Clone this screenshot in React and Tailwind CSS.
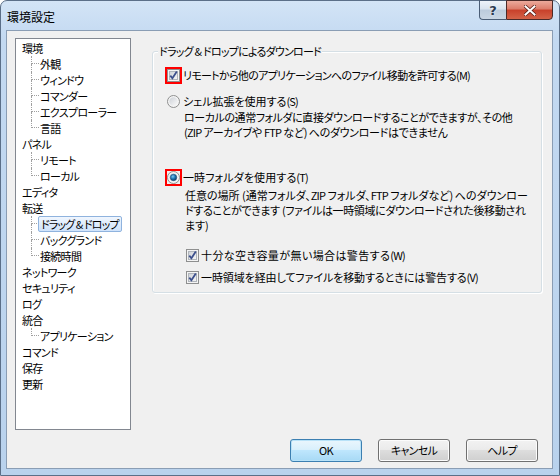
import React from 'react';

const tree = [
  { label: '環境', children: ['外観', 'ウィンドウ', 'コマンダー', 'エクスプローラー', '言語'] },
  { label: 'パネル', children: ['リモート', 'ローカル'] },
  { label: 'エディタ' },
  { label: '転送', children: ['ドラッグ & ドロップ', 'バックグランド', '接続時間'] },
  { label: 'ネットワーク' },
  { label: 'セキュリティ' },
  { label: 'ログ' },
  { label: '統合', children: ['アプリケーション'] },
  { label: 'コマンド' },
  { label: '保存' },
  { label: '更新' },
];

const CheckBox = ({ id }) => (
  <svg width="13" height="13" viewBox="0 0 13 13" className="shrink-0 block">
    <defs>
      <linearGradient id={id} x1="0" y1="0" x2="1" y2="1">
        <stop offset="0" stopColor="#cdd1d7" />
        <stop offset="1" stopColor="#f7f7f7" />
      </linearGradient>
    </defs>
    <rect x="0.5" y="0.5" width="12" height="12" fill="#f4f4f4" stroke="#8e8f8f" />
    <rect x="2.5" y="2.5" width="8" height="8" fill={`url(#${id})`} stroke="#b0b5bc" />
    <path d="M3.3 6.6 L5.4 9.2 L9.8 2.6" fill="none" stroke="#3c4f8c" strokeWidth="1.8" />
  </svg>
);

const Radio = ({ id, checked }) => (
  <svg width="13" height="13" viewBox="0 0 13 13" className="shrink-0 block">
    <defs>
      <linearGradient id={id} x1="0" y1="0" x2="1" y2="1">
        <stop offset="0" stopColor="#cdd1d7" />
        <stop offset="1" stopColor="#fafafa" />
      </linearGradient>
      <radialGradient id={`${id}b`} cx="0.4" cy="0.35" r="0.7">
        <stop offset="0" stopColor="#7cc8f0" />
        <stop offset="0.5" stopColor="#1b76b4" />
        <stop offset="1" stopColor="#0b2f56" />
      </radialGradient>
    </defs>
    <circle cx="6.5" cy="6.5" r="6" fill="#f4f4f4" stroke="#8e8f8f" />
    <circle cx="6.5" cy="6.5" r="4.2" fill={`url(#${id})`} />
    {checked && <circle cx="6.5" cy="6.5" r="3.2" fill={`url(#${id}b)`} stroke="#1b4b78" strokeWidth="0.6" />}
  </svg>
);

const RedMark = ({ children }) => (
  <div className="w-[17px] h-[17px] border-2 border-[#ff0000] shrink-0 flex items-center justify-center">
    {children}
  </div>
);

const Button = ({ children, primary }) => (
  <button
    className={
      'w-[72px] h-[23px] rounded-[3px] border text-[11px] leading-none text-black flex items-center justify-center ' +
      (primary
        ? 'border-[#3c7fb1] bg-[linear-gradient(#eaf6fd_0%,#d9f0fc_45%,#bee6fd_50%,#a7d9f5_100%)] shadow-[inset_0_0_0_1px_#b8e2f8]'
        : 'border-[#707070] bg-[linear-gradient(#f2f2f2_0%,#ebebeb_45%,#dddddd_50%,#cfcfcf_100%)] shadow-[inset_0_0_0_1px_#fcfcfc]')
    }
  >
    {children}
  </button>
);

const TreeChild = ({ label, last, selected }) => (
  <div className="flex h-[16px] items-center whitespace-nowrap">
    <div className="ml-[9px] w-[8px] h-full flex flex-col shrink-0">
      <div className="h-[8px] border-l border-b border-dotted border-[#a0a0a0]" />
      {!last && <div className="h-[8px] border-l border-dotted border-[#a0a0a0]" />}
    </div>
    {selected ? (
      <span className="-ml-[1px] h-[16px] flex items-center px-[2px] border border-[#8fb3de] rounded-[2px] bg-[linear-gradient(#f0f6fe,#cfe3fb)] tracking-[-0.9px]">
        {label}
      </span>
    ) : (
      <span className="ml-[1px]">{label}</span>
    )}
  </div>
);

// lines are set to the widths measured on the original dialog
const Line = ({ className, children }) => (
  <div className={'shrink-0 tracking-[-0.8px] [text-align-last:justify] text-justify ' + className}>{children}</div>
);

export default function App() {
  return (
    <div className="w-[560px] h-[476px] overflow-hidden font-['Noto_Sans_CJK_JP',sans-serif] [font-feature-settings:'palt'] text-[11px] tracking-[-0.7px] text-black">
      <div className="w-full h-full flex flex-col border border-[#5b6f88] rounded-t-[7px] bg-[linear-gradient(#d3e4f6_0%,#c3d9f1_8%,#b9d2ed_100%)]">
        {/* Title bar */}
        <div className="h-[29px] flex items-start justify-between shrink-0">
          <div className="pl-[6px] pt-[7px] text-[12px] leading-[18px] tracking-normal">環境設定</div>
          <div className="flex mr-[6px] -mt-px">
            <div className="w-[27px] h-[20px] border border-[#4a5d76] border-r-0 rounded-bl-[4px] bg-[linear-gradient(#eef3f9_0%,#d9e3ee_45%,#bccbdc_50%,#c9d6e4_100%)] flex items-center justify-center font-['DejaVu_Sans',sans-serif] text-[13px] font-bold text-[#2b3950] leading-none tracking-normal [text-shadow:0_0_2px_#fff]">
              ?
            </div>
            <div className="w-[47px] h-[20px] border border-[#4a2a28] rounded-br-[4px] bg-[linear-gradient(#ecaa9c_0%,#dc7c6a_45%,#c8402a_50%,#d46348_100%)] flex items-center justify-center">
              <svg width="12" height="11" viewBox="0 0 12 11">
                <path d="M1.5 1.5 L10.5 9.5 M10.5 1.5 L1.5 9.5" stroke="#5a1f17" strokeWidth="3.6" strokeLinecap="square" />
                <path d="M1.5 1.5 L10.5 9.5 M10.5 1.5 L1.5 9.5" stroke="#ffffff" strokeWidth="2" strokeLinecap="square" />
              </svg>
            </div>
          </div>
        </div>

        {/* Client area */}
        <div className="ml-[5px] mr-[6px] mb-[6px] flex-1 border border-[#8a9db4] bg-[#f0f0f0] flex flex-col pt-[7px] pb-[6px]">
          <div className="flex h-[392px]">
            {/* Tree */}
            <div className="ml-[8px] w-[116px] h-full border border-[#828790] bg-white pt-[1px] pl-[6px] leading-[16px] whitespace-nowrap">
              {tree.map((node) => (
                <div key={node.label}>
                  <div className="h-[16px] flex items-center">{node.label}</div>
                  {node.children &&
                    node.children.map((c, i) => (
                      <TreeChild
                        key={c}
                        label={c}
                        last={i === node.children.length - 1}
                        selected={c === 'ドラッグ & ドロップ'}
                      />
                    ))}
                </div>
              ))}
            </div>

            {/* Group box */}
            <div className="ml-[21px] mt-[13px] w-[390px] h-[242px] relative border border-[#d5dfe5] rounded-[3px] shadow-[inset_1px_1px_0_#ffffff,1px_1px_0_#ffffff]">
              <div className="absolute -top-[9px] left-[5px] px-[1px] bg-[#f0f0f0] leading-[17px] whitespace-nowrap">
                <Line className="w-[162px]">ドラッグ & ドロップによるダウンロード</Line>
              </div>
              <div className="pl-[12px] pt-[15px] flex flex-col leading-[15px] whitespace-nowrap">
                <div className="flex items-center h-[17px]">
                  <RedMark>
                    <CheckBox id="cb1" />
                  </RedMark>
                  <Line className="ml-[1px] w-[287px]">リモートから他のアプリケーションへのファイル移動を許可する(M)</Line>
                </div>

                <div className="flex items-center h-[16px] mt-[9px]">
                  <div className="w-[17px] flex justify-center">
                    <Radio id="rd1" />
                  </div>
                  <Line className="ml-[1px] w-[115px]">シェル拡張を使用する(S)</Line>
                </div>
                <div className="ml-[19px] mt-[1px]">
                  <Line className="w-[328px]">ローカルの通常フォルダに直接ダウンロードすることができますが、その他</Line>
                  <Line className="w-[263px]">(ZIP アーカイブや FTP など) へのダウンロードはできません</Line>
                </div>

                <div className="flex items-center h-[17px] mt-[29px]">
                  <RedMark>
                    <Radio id="rd2" checked />
                  </RedMark>
                  <Line className="ml-[1px] w-[125px]">一時フォルダを使用する(T)</Line>
                </div>
                <div className="ml-[20px] mt-[2px]">
                  <Line className="w-[342px]">任意の場所 (通常フォルダ、ZIP フォルダ、FTP フォルダなど) へのダウンロー</Line>
                  <Line className="w-[340px]">ドすることができます (ファイルは一時領域にダウンロードされた後移動され</Line>
                  <div className="tracking-normal">ます)</div>
                </div>

                <div className="flex items-center h-[16px] mt-[14px] ml-[21px]">
                  <CheckBox id="cb2" />
                  <Line className="ml-[2px] w-[204px]">十分な空き容量が無い場合は警告する(W)</Line>
                </div>
                <div className="flex items-center h-[16px] mt-[6px] ml-[21px]">
                  <CheckBox id="cb3" />
                  <Line className="ml-[2px] w-[277px]">一時領域を経由してファイルを移動するときには警告する(V)</Line>
                </div>
              </div>
            </div>
          </div>

          {/* Buttons */}
          <div className="mt-[9px] flex justify-end gap-[16px] pr-[14px]">
            <Button primary>OK</Button>
            <Button>キャンセル</Button>
            <Button>ヘルプ</Button>
          </div>
        </div>
      </div>
    </div>
  );
}
